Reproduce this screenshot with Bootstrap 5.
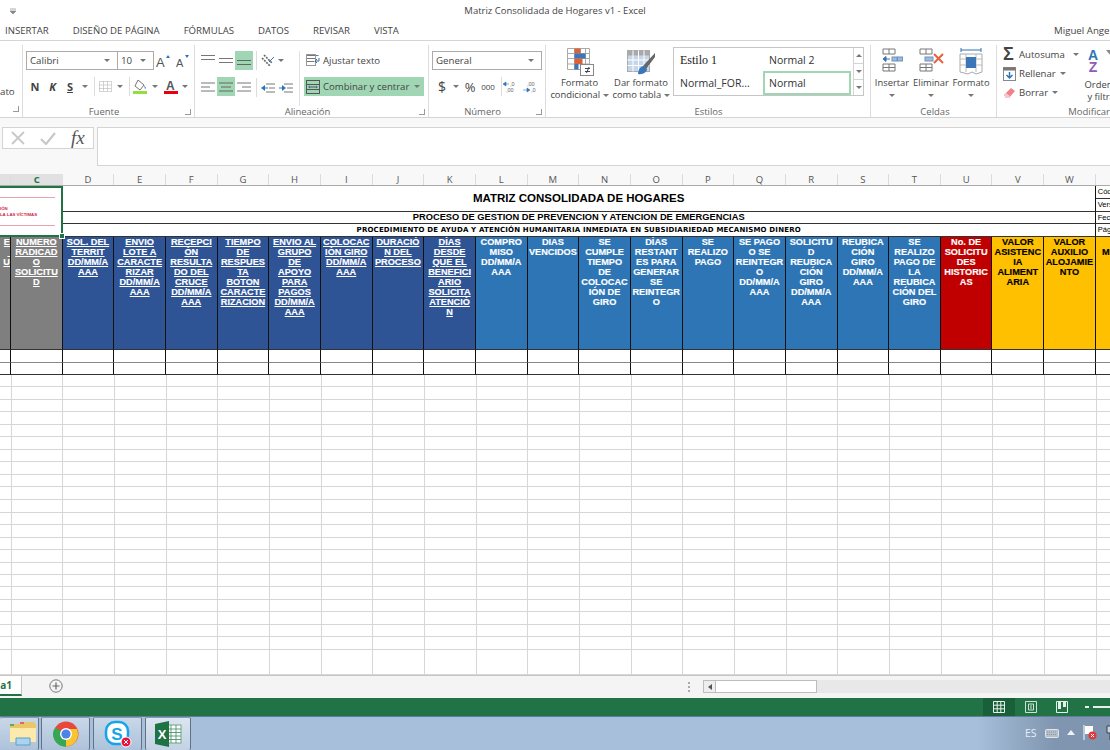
<!DOCTYPE html>
<html lang="es">
<head>
<meta charset="utf-8">
<title>Matriz Consolidada de Hogares v1 - Excel</title>
<link href="https://cdn.jsdelivr.net/npm/bootstrap@5.3.0/dist/css/bootstrap.min.css" rel="stylesheet">
<style>
html,body{margin:0;width:1110px;height:750px;overflow:hidden;background:#fff}
body{font-family:"Open Sans","Liberation Sans",sans-serif;font-size:9.7px;color:#444;line-height:12px}
.app{width:1110px;height:750px}
.title{height:22px;position:relative;flex:none}
.title span{font-size:9.5px;color:#444}
.tabs{height:19px;flex:none;padding-left:5px;gap:24px;border-bottom:1px solid #d4d4d4;font-size:9.6px;white-space:nowrap}
.user{position:absolute;left:1054px;top:25px;font-size:9.7px;white-space:nowrap}
.ribbon{height:77px;flex:none;border-bottom:1px solid #d4d4d4;white-space:nowrap;overflow:hidden}
.grp{height:72px;margin-top:4px;border-right:1px solid #dcdcdc;flex:none;padding-top:6px}
.g0{width:23px}.g1{width:172px;padding-left:3px}.g2{width:234px;padding-left:4px}.g3{width:117px;padding-left:3px}
.g4{width:325px;padding-top:2px;padding-left:1px}.g5{width:126px;padding-top:2px;padding-left:3px}.g6{width:113px;padding-top:2px;padding-left:6px;border-right:0}
.lab{height:12px;font-size:9.5px;color:#666;line-height:12px;text-align:center}
.g6 .lab{text-align:right}
.body63{height:55px;flex:none}
.g4 .body63,.g5 .body63,.g6 .body63{height:59px}
.ato{padding-top:35px}
.r1{height:19px}.r2{height:19px;margin-top:7px}
.x{width:12px;display:flex;align-items:center;justify-content:center}
.x::after{content:"";width:6px;height:6px;border:1px solid #9a9a9a;border-width:0 1px 1px 0;display:block}
.box{height:19px;border:1px solid #ababab;background:#fff;padding:0 3px;color:#444;font-size:9.7px}
.bn{width:92px}.bs{width:36px;border-left:0}.bg{width:110px}
.it{display:flex;align-items:center;justify-content:center;height:19px;flex:none}
.w2{width:2px;flex:none}.w3{width:3px;flex:none}.w4{width:4px;flex:none}.w10{width:10px}.w12{width:12px}.w14{width:14px}.w16{width:16px}.w17{width:17px}.w18{width:18px}.w19{width:19px}.w20{width:20px}
.colb{width:43px;flex:none}
.car{display:inline-block;width:0;height:0;border:3px solid transparent;border-top-color:#777;border-bottom:0;vertical-align:middle}
.rotate{transform:rotate(180deg)}
.sep{width:1px;height:19px;background:#dcdcdc;flex:none}
.hi{background:#a0d6b4}
.fs{font-weight:700;color:#444;font-size:11px}
.dol{font-size:14px;font-weight:400;color:#444}
.pct{font-size:13px;color:#444}
.mil{font-size:8px}
.cb{width:120px;height:19px;margin-left:4px;padding-left:2px;margin-top:7px}
.aj{height:19px;margin-left:6px}
.tx{margin-left:3px;font-size:9.6px}
.big{text-align:center;flex:none;line-height:12px;color:#444;font-size:9.4px}
.big svg{display:block;margin:0 auto}
.ico{height:30px}
.fc{width:65px}.df{width:58px}.c1{width:36px}.c2{width:42px}.c3{width:38px}
.gal{width:191px;height:49px;border:1px solid #c6c6c6;margin-left:3px;flex:none;background:#fff}
.gc{width:178px;display:grid;grid-template-columns:89px 89px;grid-template-rows:23px 24px}
.gc>div{display:flex;align-items:center;padding-left:6px;font-size:10.5px;color:#333}
.gc>.on{border:2px solid #a0d6b4;padding-left:4px;margin-right:1px}
.gc>.ser{font-family:"Liberation Serif",serif;font-size:12px;color:#222}
.gs{width:11px;margin-left:1px;border-left:1px solid #d4d4d4}
.gs>div{flex:1;display:flex;align-items:center;justify-content:center;border-bottom:1px solid #d4d4d4}
.gs>div:last-child{border:0}
.mod{width:78px;margin-top:-2px;flex:none}
.ml{height:19px;line-height:19px}
.sig{font-family:"Liberation Sans",sans-serif;font-size:18px;font-weight:700;color:#444;width:13px}
.srt{width:40px;margin-left:2px}
.azw{padding-left:5px;gap:2px;margin-top:2px}
.az{font-family:"Liberation Sans",sans-serif;font-size:14px;font-weight:700;line-height:12px}
.azA{color:#2e75b6}.azZ{color:#8e5cb8}
.gap{height:9px;flex:none;background:#f8f8f8}
.fbar{height:47px;flex:none;padding-left:2px;background:#f8f8f8}
.fbox{width:92px;height:22px;border:1px solid #d4d4d4;background:#fff;flex:none;padding-left:8px;gap:15px}
.fbox i{font-family:"Liberation Serif",serif;font-size:19px;color:#555}
.finp{margin-left:3px;flex:1;height:39px;border:1px solid #d4d4d4;border-right:0;background:#fff}
.cols{display:grid;grid-template-columns:11px 51.67px repeat(21,51.67px);height:12px;width:1148px;border-bottom:1px solid #ababab;background:#f8f8f8;font-size:9.5px;color:#555;line-height:11px;text-align:center}
.cols div{border-right:1px solid #dcdcdc}
.cols .s{background:#e1e1e1}
.cols .a{color:#217346;font-weight:700;border-right:0}
.colw{height:12px;flex:none}
.wrap{height:490px;flex:none;overflow:hidden;border-bottom:1px solid #c6c6c6}
.sh{display:grid;width:1148px;grid-template-columns:11px 51.67px repeat(21,51.67px);grid-template-rows:13px 12.5px 12px 13px 113.5px 13px 12px;font-family:"Liberation Sans",Arial,sans-serif;color:#000}
.sh>div{overflow:hidden;white-space:nowrap;border-right:1px solid #111;border-bottom:1px solid #333;text-align:center}
.sh>.logo{grid-column:1/3;grid-row:1/5;border:2px solid #217346;border-left:0;position:relative;overflow:visible;padding-top:9px;text-align:left}
.logo hr{margin:0;border:0;height:1px;background:#e8a4ad;opacity:1;width:55px}
.logo p{margin:0;height:27px;padding-top:8px;font-size:4.3px;line-height:5.5px;color:#d0263c;font-weight:700}
.handle{position:absolute;right:-4px;bottom:-4px;width:6px;height:6px;background:#217346;border:1px solid #fff}
.t1{grid-column:3/23;grid-row:1/3;font-size:11.5px;font-weight:700;line-height:24px}
.t2{grid-column:3/23;grid-row:3;font-size:9.3px;font-weight:700;line-height:11px}
.t3{grid-column:3/23;grid-row:4;font-size:7px;font-weight:700;line-height:12px;letter-spacing:.18px;font-family:"DejaVu Sans","Liberation Sans",sans-serif}
.sh>.mini{font-size:7.5px;line-height:12px;text-align:left;padding-left:2px;border-right:0}
.h{color:#fff;font-size:9.2px;font-weight:700;line-height:10px;-webkit-text-stroke:.15px currentColor}
.gr{background:#7f7f7f}.db{background:#2f5496}.lb{background:#2e75b6}.rd{background:#c00000}.yl{background:#ffc000;color:#000}
.u{text-decoration:underline}
.sh>.rt{text-align:right}
.sh>.d2{border-bottom-color:#888}
.fill{height:303px;background-image:repeating-linear-gradient(to right,transparent 0,transparent 10.67px,#d6d6d6 10.67px,#d6d6d6 11.67px,transparent 11.67px,transparent 51.67px),repeating-linear-gradient(to bottom,transparent 0,transparent 11.5px,#d6d6d6 11.5px,#d6d6d6 12.5px)}
.stabs{height:22px;flex:none;background:#f4f4f4}
.stab{width:22px;height:20px;background:#fff;border-right:1px solid #c6c6c6;border-bottom:2px solid #217346;color:#217346;font-weight:700;font-size:10px;line-height:18px;text-align:right;padding-right:9px;overflow:hidden;flex:none}
.plus{margin-left:27px;margin-top:3px;flex:none}
.dots{margin-left:625px;margin-top:6px;width:3px;height:10px;border-left:2px dotted #aaa;flex:none}
.track{margin-left:12px;margin-top:4px;height:13px;flex:1;background:#e8e8e8}
.thumb{width:114px;height:13px;background:#fff;border:1px solid #bdbdbd;flex:none}
.thumb span{display:flex;width:12px;height:11px;background:#eee;border-right:1px solid #bdbdbd;align-items:center;justify-content:center}
.tri{width:0;height:0;border:3px solid transparent;border-right:4px solid #555;border-left:0}
.status{height:19px;flex:none;background:#217346;border-bottom:1px solid #5d7f9d;padding-left:983px}
.active{width:32px;background:#19603a}
.sv{width:31.5px}
.zoomb{margin-left:7px;gap:4px}
.zoomb i{display:block;height:2px;background:#e6efe9}
.task{height:33px;flex:none;background:linear-gradient(to right,#a7bfdb 0,#a7bfdb 88%,#8096b0 95%,#7f94ae 100%)}
.tb{height:33px;flex:none;border:1px solid #5f7288;border-top-color:#8a9bb0;border-bottom:0;border-radius:2px;background:linear-gradient(#c9d7e8,#adc2da)}
.tb0{width:39px;border-left:0;display:flex;justify-content:flex-end}
.tb1{width:49px;margin-left:2px}.tb2{width:49px;margin-left:3px}
.tb3{width:46px;margin-left:3px;background:linear-gradient(#dbe5f0,#c2d2e4)}
.tray{position:absolute;left:1025px;top:725px;color:#e8eef5;font-size:10.5px}
</style>
</head>
<body>
<svg width="0" height="0" class="position-absolute">
<symbol id="lc" viewBox="0 0 14 10"><path d="M0 1h14M2 5h10M0 9h14" stroke="#666" stroke-width="1"/></symbol>
<symbol id="ll" viewBox="0 0 14 10"><path d="M0 1h14M0 5h9M0 9h14" stroke="#777" stroke-width="1"/></symbol>
<symbol id="lr" viewBox="0 0 14 10"><path d="M0 1h14M5 5h9M0 9h14" stroke="#777" stroke-width="1"/></symbol>
</svg>
<div class="app d-flex flex-column">
  <div class="title d-flex align-items-center justify-content-center">
    <svg class="position-absolute top-50 translate-middle-y start-0 ms-2" width="10" height="10" viewBox="0 0 10 10"><path d="M2 3h6M2 5h6l-3 3z" stroke="#888" fill="#888" stroke-width=".7"/></svg>
    <span>Matriz Consolidada de Hogares v1 - Excel</span>
  </div>
  <div class="tabs d-flex align-items-center">
    <span>INSERTAR</span><span>DISEÑO DE PÁGINA</span><span>FÓRMULAS</span><span>DATOS</span><span>REVISAR</span><span>VISTA</span>
  </div>
  <div class="user">Miguel Ange</div>
  <div class="ribbon d-flex">
    <div class="grp g0 d-flex flex-column">
      <div class="body63 ato">ato</div>
      <div class="d-flex justify-content-end"><span class="x"></span></div>
    </div>
    <div class="grp g1 d-flex flex-column">
      <div class="body63">
        <div class="r1 d-flex">
          <div class="box bn d-flex align-items-center justify-content-between"><span>Calibri</span><span class="car me-1"></span></div>
          <div class="box bs d-flex align-items-center justify-content-between"><span>10</span><span class="car me-1"></span></div>
          <div class="it w18"><svg width="16" height="14" viewBox="0 0 16 14"><text x="1" y="13" font-family="Liberation Sans" font-size="13" fill="#555">A</text><path d="M11 4l2-3 2 3z" fill="#2e75b6"/></svg></div>
          <div class="it w19"><svg width="16" height="14" viewBox="0 0 16 14"><text x="2" y="13" font-family="Liberation Sans" font-size="11" fill="#555">A</text><path d="M11 1l2 3 2-3z" fill="#2e75b6"/></svg></div>
        </div>
        <div class="r2 d-flex">
          <div class="it w18 fs">N</div><div class="it w17 fs fst-italic">K</div><div class="it w18 fs text-decoration-underline">S</div>
          <div class="it w12"><span class="car"></span></div><div class="w3"></div><div class="sep"></div>
          <div class="it w20"><svg width="13" height="11" viewBox="0 0 13 11"><path d="M.5.5h12v10H.5zM4.5.5v10M8.5.5v10M.5 4h12M.5 7.5h12" stroke="#aaa" stroke-dasharray="1 1" fill="none"/></svg></div>
          <div class="it w10"><span class="car"></span></div><div class="w4"></div><div class="sep"></div>
          <div class="it w20"><svg width="14" height="15" viewBox="0 0 14 15"><path d="M5 1l6 5-4 5-5-4z" fill="#fff" stroke="#777"/><path d="M11 6l2 3-1 1z" fill="#3a76b8"/><rect y="12" width="14" height="3" fill="#92e040"/></svg></div>
          <div class="it w10"><span class="car"></span></div><div class="w4"></div>
          <div class="it w14"><svg width="14" height="15" viewBox="0 0 14 15"><text x="2" y="11" font-family="Liberation Sans" font-size="12" font-weight="700" fill="#555">A</text><rect y="12" width="14" height="3" fill="#e8000e"/></svg></div>
          <div class="it w14"><span class="car"></span></div>
        </div>
      </div>
      <div class="d-flex"><div class="lab flex-grow-1">Fuente</div><span class="x"></span></div>
    </div>
    <div class="grp g2 d-flex flex-column">
      <div class="body63 d-flex">
        <div>
          <div class="r1 d-flex">
            <div class="it w18 align-items-start pt-1"><svg width="14" height="6" viewBox="0 0 14 6"><path d="M0 .5h14M0 4.5h14" stroke="#777"/></svg></div>
            <div class="it w18"><svg width="14" height="6" viewBox="0 0 14 6"><path d="M0 .5h14M0 4.5h14" stroke="#777"/></svg></div>
            <div class="it w18 hi align-items-end pb-1"><svg width="14" height="6" viewBox="0 0 14 6"><path d="M0 .5h14M0 4.5h14" stroke="#666"/></svg></div>
          </div>
          <div class="r2 d-flex">
            <div class="it w18"><svg width="14" height="10"><use href="#ll"/></svg></div>
            <div class="it w18 hi"><svg width="14" height="10"><use href="#lc"/></svg></div>
            <div class="it w18"><svg width="14" height="10"><use href="#lr"/></svg></div>
          </div>
        </div>
        <div class="w3"></div>
        <div class="colb">
          <div class="d-flex"><div class="sep"></div>
            <div class="w4"></div><div class="it w14"><svg width="14" height="13" viewBox="0 0 14 13"><path d="M1 4l8 8M3 1l8 8" stroke="#666" stroke-width="1.6" stroke-dasharray="2 1" fill="none"/><path d="M8 8l5-5" stroke="#2e75b6"/></svg></div>
            <div class="it w12"><span class="car"></span></div>
          </div>
          <div class="d-flex mt-2"><div class="sep"></div>
            <div class="w4"></div>
            <div class="it w14"><svg width="14" height="10" viewBox="0 0 14 10"><path d="M5 1h9M8 5h6M5 9h9" stroke="#777"/><path d="M0 5l4-3v6z" fill="#2e75b6"/><path d="M3 5h4" stroke="#2e75b6"/></svg></div>
            <div class="w4"></div>
            <div class="it w14"><svg width="14" height="10" viewBox="0 0 14 10"><path d="M5 1h9M8 5h6M5 9h9" stroke="#777"/><path d="M7 5L3 2v6z" fill="#2e75b6"/><path d="M0 5h4" stroke="#2e75b6"/></svg></div>
          </div>
        </div>
        <div class="border-start">
          <div class="aj d-flex align-items-center"><svg width="14" height="13" viewBox="0 0 14 13"><path d="M.5 1.500h12M.5 4.500h9M.5 7.500h8" stroke="#777" fill="none"/><rect x=".5" y=".5" width="9" height="11" fill="none" stroke="#999"/><path d="M13 4v3H9m2-2l-2 2 2 2" stroke="#2e75b6" fill="none"/></svg><span class="tx">Ajustar texto</span></div>
          <div class="cb hi d-flex align-items-center"><svg width="14" height="14" viewBox="0 0 14 14"><rect x=".5" y=".5" width="13" height="13" fill="none" stroke="#555"/><path d="M.5 4.500h13M.5 9.500h13M3 7h8" stroke="#555" fill="none"/><path d="M2 7l2-1.500v3zM12 7l-2-1.500v3z" fill="#2e75b6"/></svg><span class="tx flex-grow-1">Combinar y centrar</span><span class="car me-1"></span></div>
        </div>
      </div>
      <div class="d-flex"><div class="lab flex-grow-1">Alineación</div><span class="x"></span></div>
    </div>
    <div class="grp g3 d-flex flex-column">
      <div class="body63">
        <div class="r1"><div class="box bg d-flex align-items-center justify-content-between"><span>General</span><span class="car me-1"></span></div></div>
        <div class="r2 d-flex">
          <div class="w2"></div><div class="it w16 dol">$</div><div class="it w12"><span class="car"></span></div>
          <div class="it w16 pct">%</div><div class="it w20 mil">000</div>
          <div class="w3"></div><div class="sep"></div>
          <div class="it w16"><svg width="14" height="12" viewBox="0 0 14 12"><text x="7" y="5" font-size="5.500" font-family="Liberation Sans" fill="#666">,0</text><text x="3" y="11" font-size="5.500" font-family="Liberation Sans" fill="#666">,00</text><path d="M0 3l3-2v4zM2 3h4" fill="#2e75b6" stroke="#2e75b6" stroke-width=".6"/></svg></div>
          <div class="w4"></div>
          <div class="it w16"><svg width="14" height="12" viewBox="0 0 14 12"><text x="4" y="5" font-size="5.500" font-family="Liberation Sans" fill="#666">,00</text><text x="8" y="11" font-size="5.500" font-family="Liberation Sans" fill="#666">,0</text><path d="M7 9L4 7v4zM0 9h5" fill="#2e75b6" stroke="#2e75b6" stroke-width=".6"/></svg></div>
        </div>
      </div>
      <div class="d-flex"><div class="lab flex-grow-1">Número</div><span class="x"></span></div>
    </div>
    <div class="grp g4 d-flex flex-column">
      <div class="body63 d-flex">
        <div class="big fc">
          <div class="ico"><svg width="28" height="29" viewBox="0 0 28 29"><path d="M1.500 1.500h22v21h-22zM1.500 6.500h22M1.500 11.500h22M1.500 17h22M8.500 1.500v21M14.500 1.500v21M19.500 1.500v21" stroke="#aaa" fill="#fff"/><rect x="8.500" y="1.500" width="6" height="5" fill="#d9623a"/><rect x="8.500" y="6.500" width="11" height="5" fill="#3a76b8"/><rect x="8.500" y="11.500" width="8" height="5.500" fill="#d9623a"/><rect x="8.500" y="17" width="4" height="5.500" fill="#3a76b8"/><rect x="14.500" y="17.500" width="13" height="11" fill="#fff" stroke="#888"/><path d="M19 21.500h5M19 24.500h5M23 20l-2.500 6" stroke="#444" fill="none"/></svg></div>
          <div>Formato</div><div>condicional <span class="car"></span></div>
        </div>
        <div class="big df">
          <div class="ico"><svg width="30" height="29" viewBox="0 0 30 29"><rect x="1.500" y="3.500" width="22" height="21" fill="#c6d6ea" stroke="#aaa"/><rect x="1.500" y="3.500" width="22" height="5" fill="#a9a9a9"/><path d="M1.500 13h22M1.500 18.500h22M7 3.500v21M12.500 3.500v21M18 3.500v21" stroke="#fff" fill="none"/><path d="M29 6L17 19l3 3L29 10z" fill="#666"/><path d="M12 27c0-5 3-8 6-8l3 3c0 3-4 6-9 5z" fill="#3a76b8"/></svg></div>
          <div>Dar formato</div><div>como tabla <span class="car"></span></div>
        </div>
        <div class="gal d-flex">
          <div class="gc"><div class="ser">Estilo 1</div><div>Normal 2</div><div>Normal_FOR...</div><div class="on">Normal</div></div>
          <div class="gs d-flex flex-column"><div><span class="car rotate"></span></div><div><span class="car"></span></div><div><span class="car"></span></div></div>
        </div>
      </div>
      <div class="lab">Estilos</div>
    </div>
    <div class="grp g5 d-flex flex-column">
      <div class="body63 d-flex">
        <div class="big c1">
          <div class="ico"><svg width="24" height="26" viewBox="0 0 24 26"><path d="M3 2h12v5H3zM9 2v5M3 17h12v7H3zM3 20.500h12M9 17v7" stroke="#777" fill="#fff"/><rect x="12" y="10" width="5" height="4" fill="#9dbcdc" stroke="#6f94bd"/><rect x="17.500" y="10" width="5" height="4" fill="#9dbcdc" stroke="#6f94bd"/><path d="M3 12l3-2.500v5zM5 12h5" fill="#2e75b6" stroke="#2e75b6"/></svg></div>
          <div>Insertar</div><div><span class="car"></span></div>
        </div>
        <div class="big c2">
          <div class="ico"><svg width="28" height="26" viewBox="0 0 28 26"><path d="M3 2h12v5H3zM9 2v5M3 17h12v7H3zM3 20.500h12M9 17v7" stroke="#777" fill="#fff"/><rect x="8" y="10" width="8" height="4" fill="#9dbcdc" stroke="#6f94bd"/><path d="M17 7l9 9M26 7l-9 9" stroke="#e8603c" stroke-width="2"/></svg></div>
          <div>Eliminar</div><div><span class="car"></span></div>
        </div>
        <div class="big c3">
          <div class="ico"><svg width="26" height="29" viewBox="0 0 26 29"><path d="M2 7h22v18l-6 2-4-2-4 2-8-2z" fill="#fff" stroke="#aaa"/><path d="M2 12h22M2 18h22M8 7v18M18 7v18" stroke="#bbb"/><rect x="8" y="10" width="10" height="11" fill="#3a76b8"/><path d="M3 3h20M3 1v4M23 1v4" stroke="#2e75b6"/></svg></div>
          <div>Formato</div><div><span class="car"></span></div>
        </div>
      </div>
      <div class="lab">Celdas</div>
    </div>
    <div class="grp g6 d-flex flex-column">
      <div class="body63 d-flex">
        <div class="mod">
          <div class="ml d-flex align-items-center"><span class="sig">Σ</span><span class="tx">Autosuma</span><span class="car ms-2"></span></div>
          <div class="ml d-flex align-items-center"><svg width="13" height="14" viewBox="0 0 13 14"><rect x=".5" y=".5" width="12" height="13" fill="#fff" stroke="#888"/><rect x=".5" y=".5" width="12" height="3" fill="#777"/><path d="M6.500 5v6M3.500 8l3 3 3-3" stroke="#2e75b6" stroke-width="1.500" fill="none"/></svg><span class="tx">Rellenar</span><span class="car ms-1"></span></div>
          <div class="ml d-flex align-items-center"><svg width="13" height="12" viewBox="0 0 13 12"><path d="M1 8l7-7 4 3-6 7H3z" fill="#f0808c"/><path d="M1 8l2-2 4 3-1 2H3z" fill="#f7c5ca"/></svg><span class="tx">Borrar</span><span class="car ms-1"></span></div>
        </div>
        <div class="big srt">
          <div class="ico d-flex azw"><div class="az"><div class="azA">A</div><div class="azZ">Z</div></div><svg width="12" height="16" viewBox="0 0 12 16"><path d="M0 1h12L8 7v7l-3-2V7z" fill="#888"/></svg></div>
          <div>Ordenar</div><div>y filtrar</div>
        </div>
      </div>
      <div class="lab">Modificar</div>
    </div>
  </div>
  <div class="gap"></div>
  <div class="fbar d-flex">
    <div class="fbox d-flex align-items-center">
      <svg width="14" height="14" viewBox="0 0 14 14"><path d="M1 1l12 12M13 1L1 13" stroke="#c8c8c8" stroke-width="1.800"/></svg>
      <svg width="16" height="14" viewBox="0 0 16 14"><path d="M1 8l5 5L15 2" stroke="#c8c8c8" stroke-width="2.200" fill="none"/></svg>
      <i>fx</i>
    </div>
    <div class="finp"></div>
  </div>
  <div class="colw overflow-hidden">
    <div class="cols">
      <div class="s"></div><div class="s a">C</div><div>D</div><div>E</div><div>F</div><div>G</div><div>H</div><div>I</div><div>J</div><div>K</div><div>L</div><div>M</div><div>N</div><div>O</div><div>P</div><div>Q</div><div>R</div><div>S</div><div>T</div><div>U</div><div>V</div><div>W</div><div>X</div>
    </div>
  </div>
  <div class="wrap">
    <div class="sh">
      <div class="logo"><hr><p>IÓN<br>LA LAS VÍCTIMAS</p><hr><span class="handle"></span></div>
      <div class="t1">MATRIZ CONSOLIDADA DE HOGARES</div>
      <div class="mini">Código</div>
      <div class="mini">Versión</div>
      <div class="t2">PROCESO DE GESTION DE PREVENCION Y ATENCION DE EMERGENCIAS</div>
      <div class="mini">Fecha</div>
      <div class="t3">PROCEDIMIENTO DE AYUDA Y ATENCIÓN HUMANITARIA INMEDIATA EN SUBSIDIARIEDAD MECANISMO DINERO</div>
      <div class="mini">Página</div>

      <div class="h gr u rt">E<br>&nbsp;<br>U</div>
      <div class="h gr u">NUMERO<br>RADICAD<br>O<br>SOLICITU<br>D</div>
      <div class="h db u">SOL. DEL<br>TERRIT<br>DD/MM/A<br>AAA</div>
      <div class="h db u">ENVIO<br>LOTE A<br>CARACTE<br>RIZAR<br>DD/MM/A<br>AAA</div>
      <div class="h db u">RECEPCI<br>ÓN<br>RESULTA<br>DO DEL<br>CRUCE<br>DD/MM/A<br>AAA</div>
      <div class="h db u">TIEMPO<br>DE<br>RESPUES<br>TA<br>BOTON<br>CARACTE<br>RIZACION</div>
      <div class="h db u">ENVIO AL<br>GRUPO<br>DE<br>APOYO<br>PARA<br>PAGOS<br>DD/MM/A<br>AAA</div>
      <div class="h db u">COLOCAC<br>IÓN GIRO<br>DD/MM/A<br>AAA</div>
      <div class="h db u">DURACIÓ<br>N DEL<br>PROCESO</div>
      <div class="h db u">DÍAS<br>DESDE<br>QUE EL<br>BENEFICI<br>ARIO<br>SOLICITA<br>ATENCIÓ<br>N</div>
      <div class="h lb">COMPRO<br>MISO<br>DD/MM/A<br>AAA</div>
      <div class="h lb">DIAS<br>VENCIDOS</div>
      <div class="h lb">SE<br>CUMPLE<br>TIEMPO<br>DE<br>COLOCAC<br>IÓN DE<br>GIRO</div>
      <div class="h lb">DÍAS<br>RESTANT<br>ES PARA<br>GENERAR<br>SE<br>REINTEGR<br>O</div>
      <div class="h lb">SE<br>REALIZO<br>PAGO</div>
      <div class="h lb">SE PAGO<br>O SE<br>REINTEGR<br>O<br>DD/MM/A<br>AAA</div>
      <div class="h lb">SOLICITU<br>D<br>REUBICA<br>CIÓN<br>GIRO<br>DD/MM/A<br>AAA</div>
      <div class="h lb">REUBICA<br>CIÓN<br>GIRO<br>DD/MM/A<br>AAA</div>
      <div class="h lb">SE<br>REALIZO<br>PAGO DE<br>LA<br>REUBICA<br>CIÓN DEL<br>GIRO</div>
      <div class="h rd">No. DE<br>SOLICITU<br>DES<br>HISTORIC<br>AS</div>
      <div class="h yl">VALOR<br>ASISTENC<br>IA<br>ALIMENT<br>ARIA</div>
      <div class="h yl">VALOR<br>AUXILIO<br>ALOJAMIE<br>NTO</div>
      <div class="h yl">&nbsp;<br>MENAJE</div>

      <div class="d2"></div><div class="d2"></div><div class="d2"></div><div class="d2"></div><div class="d2"></div><div class="d2"></div><div class="d2"></div><div class="d2"></div><div class="d2"></div><div class="d2"></div><div class="d2"></div><div class="d2"></div><div class="d2"></div><div class="d2"></div><div class="d2"></div><div class="d2"></div><div class="d2"></div><div class="d2"></div><div class="d2"></div><div class="d2"></div><div class="d2"></div><div class="d2"></div><div class="d2"></div>
      <div></div><div></div><div></div><div></div><div></div><div></div><div></div><div></div><div></div><div></div><div></div><div></div><div></div><div></div><div></div><div></div><div></div><div></div><div></div><div></div><div></div><div></div><div></div>
    </div>
    <div class="fill"></div>
  </div>
  <div class="stabs d-flex">
    <div class="stab">a1</div>
    <svg class="plus" width="14" height="14" viewBox="0 0 14 14"><circle cx="7" cy="7" r="6.200" fill="#f4f4f4" stroke="#777"/><path d="M3.500 7h7M7 3.500v7" stroke="#666" stroke-width="1.200"/></svg>
    <div class="dots"></div>
    <div class="track d-flex"><div class="thumb"><span><i class="tri"></i></span></div></div>
  </div>
  <div class="status d-flex">
    <div class="active d-flex align-items-center justify-content-center"><svg width="12" height="12" viewBox="0 0 12 12"><path d="M.5.5h11v11H.5zM4.200.5v11M7.800.5v11M.5 4.200h11M.5 7.800h11" stroke="#e8f0ea" fill="none"/></svg></div>
    <div class="sv d-flex align-items-center justify-content-center"><svg width="12" height="12" viewBox="0 0 12 12"><path d="M.5.5h11v11H.5z" stroke="#cfe0d5" fill="none"/><path d="M3.500 3h5v6h-5zM5 5h2M5 7h2" stroke="#cfe0d5" fill="none"/></svg></div>
    <div class="sv d-flex align-items-center justify-content-center"><svg width="12" height="12" viewBox="0 0 12 12"><path d="M.5.5h11v11H.5z" stroke="#e8f0ea" fill="none"/><path d="M2 1h3v7H2zM7 1h3v5H7z" fill="#e8f0ea"/></svg></div>
    <div class="zoomb d-flex align-items-center flex-grow-1"><i class="w4"></i><i class="flex-grow-1"></i></div>
  </div>
  <div class="task d-flex">
    <div class="tb tb0"><svg width="30" height="28" viewBox="0 0 30 28"><path d="M2 6h9l2-2h13l2 3v17H2z" fill="#e9c766"/><path d="M2 10h26v14H2z" fill="#fbe9ad"/><path d="M2 6h4v2H2z" fill="#5cab5c"/><path d="M12 4h4v2h-4z" fill="#d66"/><path d="M8 20h14v7H8z" fill="#a9d3ee" stroke="#5b9fd0"/></svg></div>
    <div class="tb tb1 d-flex align-items-center justify-content-center"><svg width="26" height="26" viewBox="0 0 26 26"><circle cx="13" cy="13" r="12.500" fill="#e8483b"/><path d="M13 13L2 20A12.500 12.500 0 0 1 2.300 6.500z" fill="#34a853"/><path d="M13 13l0 12.500A12.500 12.500 0 0 1 2 20z" fill="#34a853"/><path d="M13 8h11A12.500 12.500 0 0 1 13 25.500z" fill="#f7c62f"/><circle cx="13" cy="13" r="6" fill="#fff"/><circle cx="13" cy="13" r="4.600" fill="#4a84e8"/></svg></div>
    <div class="tb tb2 d-flex align-items-center justify-content-center"><svg width="28" height="28" viewBox="0 0 28 28"><rect x="2" y="2" width="22" height="22" rx="9" fill="#fff" stroke="#12a5e8" stroke-width="2.500"/><text x="13" y="20" text-anchor="middle" font-family="Liberation Sans" font-size="17" font-weight="700" fill="#12a5e8">S</text><circle cx="22" cy="22" r="5" fill="#e8123c" stroke="#fff"/><path d="M20 20l4 4M24 20l-4 4" stroke="#fff"/></svg></div>
    <div class="tb tb3 d-flex align-items-center justify-content-center"><svg width="28" height="26" viewBox="0 0 28 26"><rect x="12" y="4" width="15" height="18" fill="#fff" stroke="#6ea584"/><path d="M17 4v18M22 4v18M12 8h15M12 11.500h15M12 15h15M12 18.500h15" stroke="#3f8a5f" stroke-width=".8"/><path d="M1 3l14-3v26l-14-3z" fill="#1f7244"/><text x="8" y="18" text-anchor="middle" font-family="Liberation Sans" font-size="13" font-weight="700" fill="#fff">X</text></svg></div>
  </div>
  <div class="tray d-flex align-items-center">
    <span>ES</span>
    <svg class="ms-2" width="14" height="11" viewBox="0 0 14 11"><rect x=".5" y="2.500" width="13" height="8" rx="1" fill="#b5bfca" stroke="#dfe5ea"/><path d="M2 5h10M2 7.500h10" stroke="#8a97a6" stroke-dasharray="1 1"/></svg>
    <svg class="ms-2" width="8" height="5" viewBox="0 0 8 5"><path d="M0 5l4-5 4 5z" fill="#eef2f6"/></svg>
    <svg class="ms-2" width="14" height="15" viewBox="0 0 14 15"><path d="M1 0v15" stroke="#fff"/><path d="M2 1h8v8H2z" fill="#fff"/><circle cx="9.500" cy="10.500" r="4" fill="#e03a3a"/><path d="M8 9l3 3M11 9l-3 3" stroke="#fff"/></svg>
    <svg class="ms-2" width="12" height="15" viewBox="0 0 12 15"><path d="M2 1h5v7H2zM5 8h7v7H5z" fill="#ccd3da" stroke="#39424d"/></svg>
  </div>
</div>
</body>
</html>
